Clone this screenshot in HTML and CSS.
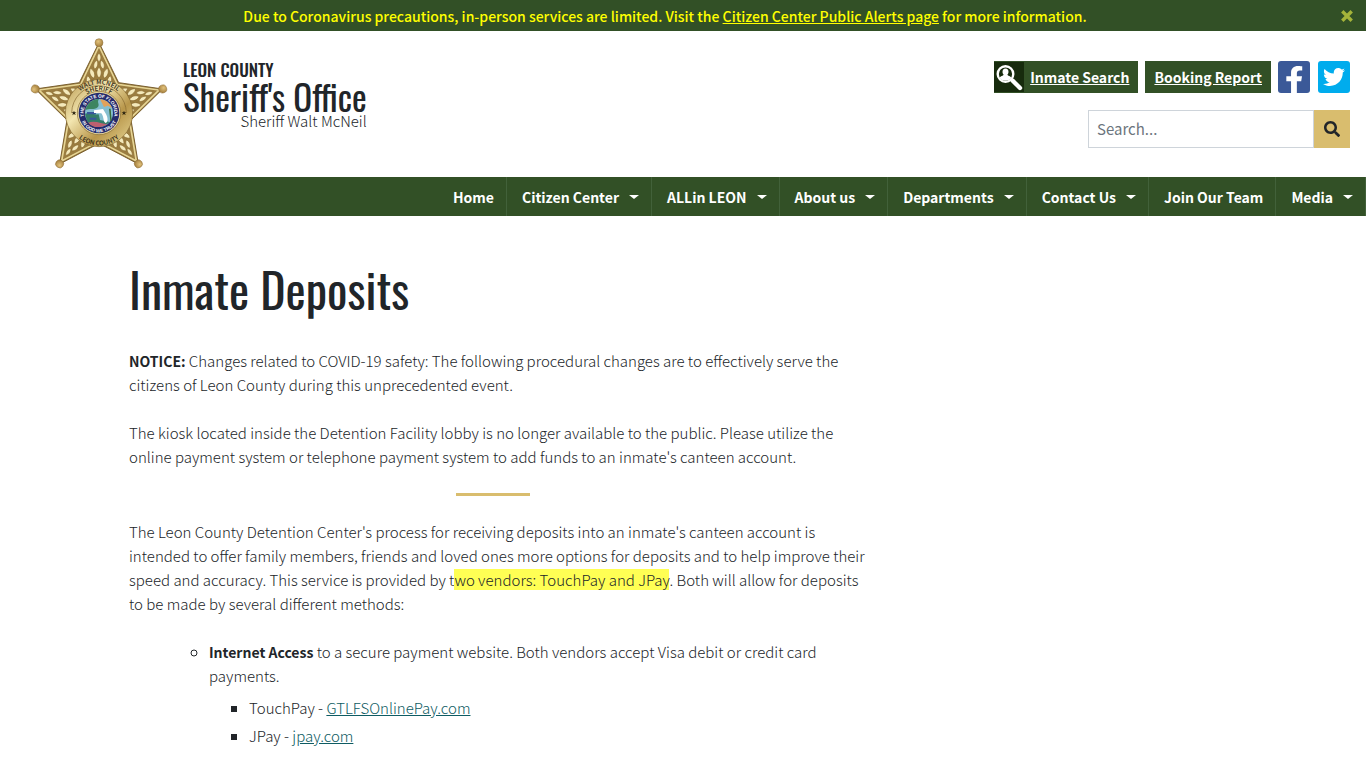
FILE: index.html
```html
<!DOCTYPE html>
<html lang="en">
<head>
    <meta charset="UTF-8">
    <meta name="viewport" content="width=device-width, initial-scale=1.0">
    <title>Inmate Deposits - Leon County Sheriff's Office</title>
    <link rel="stylesheet" href="styles.css">
</head>
<body>

<div class="alert-bar">
    <p>Due to Coronavirus precautions, in-person services are limited. Visit the <a href="#">Citizen Center Public Alerts page</a> for more information.</p>
    <button type="button" class="alert-close" aria-label="Close">
        <svg viewBox="0 0 12 12"><path d="M2.5 2.5l7 7M9.5 2.5l-7 7" stroke="currentColor" stroke-width="3.4" stroke-linecap="square"/></svg>
    </button>
</div>

<header class="site-header">
    <a class="brand" href="#">
        <svg class="badge" viewBox="30 20 414 402" role="img" aria-label="Sheriff star badge">
            <defs>
                <linearGradient id="gold" x1="0" y1="0" x2="1" y2="1">
                    <stop offset="0" stop-color="#b39247"/>
                    <stop offset=".35" stop-color="#f3e6b0"/>
                    <stop offset=".65" stop-color="#b8964a"/>
                    <stop offset="1" stop-color="#e9d898"/>
                </linearGradient>
                <radialGradient id="ball" cx=".4" cy=".35" r=".7">
                    <stop offset="0" stop-color="#e2c27c"/>
                    <stop offset="1" stop-color="#a07a38"/>
                </radialGradient>
                <path id="leaf" d="M0 -17C9 -8 9 6 0 15C-9 6 -9 -8 0 -17Z" fill="#f4e9bb" stroke="#88682c" stroke-width="2"/>
                <g id="arm">
                    <use href="#leaf" transform="translate(237 82) scale(.8)"/>
                    <use href="#leaf" transform="translate(227 104) rotate(14) scale(.85)"/>
                    <use href="#leaf" transform="translate(247 104) rotate(-14) scale(.85)"/>
                    <use href="#leaf" transform="translate(217 130) rotate(-20)"/>
                    <use href="#leaf" transform="translate(257 130) rotate(20)"/>
                    <use href="#leaf" transform="translate(237 128)"/>
                    <use href="#leaf" transform="translate(206 153) rotate(-10)"/>
                    <use href="#leaf" transform="translate(268 153) rotate(10)"/>
                    <circle cx="237" cy="37" r="12" fill="url(#ball)" stroke="#8f7038" stroke-width="1.5"/>
                </g>
                <path id="arc-name" d="M151 248A86 86 0 0 1 323 248"/>
                <path id="arc-rank" d="M170 248A67 67 0 0 1 304 248"/>
                <path id="arc-county" d="M140 248A97 97 0 0 0 334 248"/>
                <path id="arc-state" d="M194 264A46 46 0 1 1 280 264"/>
                <path id="arc-motto" d="M179 248A58 58 0 0 0 295 248"/>
            </defs>
            <path d="M237 37L296 157L428 176L333 269L355 401L237 339L119 401L141 269L46 176L178 157Z" fill="#8a6c32" stroke="#7b602e" stroke-width="3" stroke-linejoin="round"/>
            <path d="M237 47L292 162L417 179L328 267L349 392L237 333L125 392L146 267L57 179L182 162Z" fill="#9b7d40" stroke="#e7d594" stroke-width="5"/>
            <use href="#arm"/>
            <use href="#arm" transform="rotate(72 237 238)"/>
            <use href="#arm" transform="rotate(144 237 238)"/>
            <use href="#arm" transform="rotate(216 237 238)"/>
            <use href="#arm" transform="rotate(288 237 238)"/>
            <circle cx="237" cy="248" r="101" fill="url(#gold)" stroke="#84672f" stroke-width="2"/>
            <path d="M155 248A82 82 0 0 1 319 248" fill="none" stroke="#84672f" stroke-width="2"/>
            <circle cx="237" cy="248" r="65" fill="#e9dba2" stroke="#84672f" stroke-width="2"/>
            <circle cx="237" cy="248" r="61" fill="#252b6d"/>
            <circle cx="237" cy="248" r="42" fill="#86bfd0"/>
            <path d="M196 240C202 216 220 206 237 206C229 217 241 221 233 231C222 240 208 233 196 240Z" fill="#3d8560"/>
            <path d="M240 207C256 208 269 217 276 233L263 226L252 230Z" fill="#e2a25a"/>
            <path d="M195 250C213 243 221 255 236 252L240 269L269 275C250 295 212 296 200 269Z" fill="#347d68"/>
            <path d="M201 245h27v7h-27zM209 262h20v6h-20z" fill="#37579c"/>
            <path d="M222 240L249 236L258 251C264 262 265 275 257 278C248 274 253 261 244 249L222 248Z" fill="#fff"/>
            <path d="M267 235l4 37h4l-3-37z" fill="#386b39"/>
            <path d="M205 277C223 268 249 282 263 281C244 294 218 294 205 277Z" fill="#bd6070"/>
            <g class="badge-text">
                <text><textPath href="#arc-name" startOffset="50%">WALT MCNEIL</textPath></text>
                <text><textPath href="#arc-rank" startOffset="50%">SHERIFF</textPath></text>
                <text><textPath href="#arc-county" startOffset="50%">LEON COUNTY</textPath></text>
            </g>
            <path d="M162 241l2 5h5l-4 3 2 6-5-4-5 4 2-6-4-3h5zM312 241l2 5h5l-4 3 2 6-5-4-5 4 2-6-4-3h5z" fill="#2c2410"/>
            <g class="badge-motto">
                <text><textPath href="#arc-state" startOffset="50%">THE STATE OF FLORIDA</textPath></text>
                <text><textPath href="#arc-motto" startOffset="50%">IN GOD WE TRUST</textPath></text>
            </g>
        </svg>
        <span class="brand-text">
            <span class="brand-county">LEON COUNTY</span>
            <span class="brand-office">Sheriff's Office</span>
            <span class="brand-sheriff">Sheriff Walt McNeil</span>
        </span>
    </a>

    <div class="header-tools">
        <div class="quick-links">
            <a class="quick-btn" href="#">
                <svg class="inmate-icon" viewBox="0 0 30 30">
                    <rect width="30" height="30" fill="#172b0d"/>
                    <circle cx="11.5" cy="12" r="7.8" fill="none" stroke="#fff" stroke-width="2.4"/>
                    <path d="M18.5 18.5L26 26" stroke="#fff" stroke-width="4.4" stroke-linecap="round"/>
                    <path d="M11.500 6.500c-2 0-3 1.300-3 3.200 0 1.500.5 2.300 1.200 3-.1 1-3.500 1-4 3.300 1.500 1.800 3.500 2.500 5.800 2.500s4.300-.7 5.800-2.500c-.5-2.300-3.900-2.300-4-3.300.7-.7 1.200-1.500 1.200-3 0-1.900-1-3.200-3-3.200z" fill="#fff"/>
                </svg>
                <span>Inmate Search</span>
            </a>
            <a class="quick-btn" href="#"><span>Booking Report</span></a>
            <a class="social" href="#" aria-label="Facebook">
                <svg viewBox="0 0 32 32">
                    <rect width="32" height="32" rx="3" fill="#3b5998"/>
                    <path transform="translate(7 5) scale(.058 .053)" fill="#fff" d="M279.140 288l14.220-92.660h-88.910v-60.130c0-25.350 12.420-50.060 52.240-50.060h40.420V6.260S260.430 0 225.360 0c-73.220 0-121.080 44.380-121.080 124.720v70.620H22.890V288h81.390v224h100.170V288z"/>
                </svg>
            </a>
            <a class="social" href="#" aria-label="Twitter">
                <svg viewBox="0 0 32 32">
                    <rect width="32" height="32" rx="3" fill="#00aced"/>
                    <path transform="translate(5 5) scale(.043)" fill="#fff" d="M459.370 151.716c.325 4.548.325 9.097.325 13.645 0 138.720-105.583 298.558-298.558 298.558-59.452 0-114.680-17.219-161.137-47.106 8.447.974 16.568 1.299 25.340 1.299 49.055 0 94.213-16.568 130.274-44.832-46.132-.975-84.792-31.188-98.112-72.772 6.498.974 12.995 1.624 19.818 1.624 9.421 0 18.843-1.300 27.614-3.573-48.081-9.747-84.143-51.980-84.143-102.985v-1.299c13.969 7.797 30.214 12.670 47.431 13.319-28.264-18.843-46.781-51.005-46.781-87.391 0-19.492 5.197-37.360 14.294-52.954 51.655 63.675 129.300 105.258 216.365 109.807-1.624-7.797-2.599-15.918-2.599-24.040 0-57.828 46.782-104.934 104.934-104.934 30.213 0 57.502 12.670 76.670 33.137 23.715-4.548 46.456-13.320 66.599-25.340-7.798 24.366-24.366 44.833-46.132 57.827 21.117-2.273 41.584-8.122 60.426-16.243-14.292 20.791-32.161 39.308-52.628 54.253z"/>
                </svg>
            </a>
        </div>
        <form class="search">
            <input type="text" placeholder="Search..." aria-label="Search">
            <button type="submit" aria-label="Search">
                <svg viewBox="0 0 512 512"><path fill="currentColor" d="M505 442.700L405.300 343c-4.500-4.500-10.600-7-17-7H372c27.600-35.300 44-79.700 44-128C416 93.100 322.900 0 208 0S0 93.100 0 208s93.100 208 208 208c48.300 0 92.700-16.400 128-44v16.300c0 6.400 2.500 12.500 7 17l99.700 99.700c9.400 9.400 24.600 9.400 33.900 0l28.300-28.300c9.400-9.400 9.400-24.600.1-34zM208 336c-70.700 0-128-57.200-128-128 0-70.700 57.200-128 128-128 70.700 0 128 57.200 128 128 0 70.700-57.200 128-128 128z"/></svg>
            </button>
        </form>
    </div>
</header>

<nav class="main-nav">
    <ul>
        <li><a href="#">Home</a></li>
        <li><a class="dropdown" href="#">Citizen Center</a></li>
        <li><a class="dropdown" href="#">ALLin LEON</a></li>
        <li><a class="dropdown" href="#">About us</a></li>
        <li><a class="dropdown" href="#">Departments</a></li>
        <li><a class="dropdown" href="#">Contact Us</a></li>
        <li><a href="#">Join Our Team</a></li>
        <li><a class="dropdown" href="#">Media</a></li>
    </ul>
</nav>

<main class="container">
    <article class="content">
        <h1>Inmate Deposits</h1>
        <p><strong>NOTICE:</strong> Changes related to COVID-19 safety: The following procedural changes are to effectively serve the citizens of Leon County during this unprecedented event.</p>
        <p>The kiosk located inside the Detention Facility lobby is no longer available to the public. Please utilize the online payment system or telephone payment system to add funds to an inmate's canteen account.</p>
        <hr>
        <p>The Leon County Detention Center's process for receiving deposits into an inmate's canteen account is intended to offer family members, friends and loved ones more options for deposits and to help improve their speed and accuracy. This service is provided by t<mark>wo vendors: TouchPay and JPay</mark>. Both will allow for deposits to be made by several different methods:</p>
        <ul class="methods">
            <li><strong>Internet Access</strong> to a secure payment website. Both vendors accept Visa debit or credit card payments.
                <ul>
                    <li>TouchPay - <a href="#">GTLFSOnlinePay.com</a></li>
                    <li>JPay - <a href="#">jpay.com</a></li>
                </ul>
            </li>
        </ul>
    </article>
</main>

</body>
</html>
```

FILE: styles.css
```css
* {
    box-sizing: border-box;
}
body {
    margin: 0;
    font-family: "Source Sans Pro", "Noto Sans CJK SC", sans-serif;
    font-size: 15px;
    font-weight: 300;
    line-height: 24px;
    color: #212529;
    background: #fff;
}
svg {
    display: block;
}

/* Alert */
.alert-bar {
    display: flex;
    align-items: center;
    height: 31px;
    background: #325026;
    color: #ff0;
    font-size: 14px;
    font-weight: 500;
}
.alert-bar p {
    flex: 1;
    margin: 0;
    text-align: center;
}
.alert-bar a {
    color: #ff0;
}
.alert-close {
    width: 36px;
    padding: 0 11px;
    border: 0;
    background: none;
    color: #a5b43a;
}
.alert-close svg {
    width: 12px;
    height: 12px;
}

/* Header */
.site-header {
    display: flex;
    justify-content: space-between;
    padding: 6px 16px 6px 30px;
}
.brand {
    display: flex;
    gap: 15px;
    color: #212529;
    text-decoration: none;
}
.badge {
    width: 138px;
    height: 134px;
}
.badge-text {
    font: 500 19px "Noto Sans CJK SC", sans-serif;
    fill: #2c2410;
    text-anchor: middle;
}
.badge-motto {
    font: bold 14px "Liberation Sans", sans-serif;
    fill: #fff;
    text-anchor: middle;
}
.brand-text {
    display: flex;
    flex-direction: column;
    padding-top: 24px;
}
.brand-county,
.brand-office {
    font-family: Oswald, "Liberation Sans Narrow", sans-serif;
}
.brand-county {
    font-size: 17px;
    font-weight: 500;
    line-height: 18px;
}
.brand-office {
    font-size: 35px;
    font-weight: 400;
    line-height: 34px;
}
.brand-sheriff {
    line-height: 16px;
    text-align: right;
}
.header-tools {
    display: flex;
    flex-direction: column;
    align-items: flex-end;
    gap: 17px;
    padding-top: 24px;
}
.quick-links {
    display: flex;
    gap: 7px;
}
.quick-btn {
    display: flex;
    align-items: center;
    height: 32px;
    background: #325026;
    color: #fff;
    font-size: 14px;
    font-weight: 700;
}
.quick-btn span {
    padding: 0 9px;
}
.inmate-icon {
    width: 30px;
    height: 30px;
}
.inmate-icon + span {
    padding-left: 6px;
}
.social svg {
    width: 32px;
    height: 32px;
}
.social + .social {
    margin-left: 1px;
}
.search {
    display: flex;
    width: 262px;
    height: 38px;
}
.search input {
    flex: 1;
    min-width: 0;
    padding: 0 8px;
    border: 1px solid #ced4da;
    font: inherit;
}
.search input::placeholder {
    color: #6c757d;
    font-weight: 400;
    opacity: 1;
}
.search button {
    width: 36px;
    padding: 0 10px;
    border: 0;
    background: #d9bd6e;
    color: #212529;
}
.search button svg {
    width: 16px;
    height: 16px;
}

/* Navigation */
.main-nav {
    background: #325026;
}
.main-nav ul {
    display: flex;
    justify-content: flex-end;
    margin: 0;
    padding: 0;
    list-style: none;
}
.main-nav li {
    border-right: 1px solid #42613a;
}
.main-nav a {
    display: flex;
    align-items: center;
    height: 39px;
    padding: 0 12px 0 15px;
    color: #fff;
    font-size: 14px;
    font-weight: 700;
    text-decoration: none;
}
.main-nav .dropdown::after {
    content: "";
    margin-left: 10px;
    border-top: 4px solid #fff;
    border-left: 5px solid transparent;
    border-right: 5px solid transparent;
}

/* Content */
.container {
    max-width: 1140px;
    margin: 0 auto;
    padding: 0 16px;
}
.content {
    max-width: 728px;
    padding-top: 44px;
}
.content h1 {
    margin: 0 0 31px;
    font-family: Oswald, "Liberation Sans Narrow", sans-serif;
    font-size: 48px;
    font-weight: 400;
    line-height: 58px;
}
.content p {
    margin: 0 -12px 24px 0;
}
.content strong {
    font-size: 14px;
    font-weight: 700;
}
.content hr {
    width: 74px;
    height: 3px;
    margin: 0 auto 24px;
    border: 0;
    background: #d9bd6e;
}
.content mark {
    background: #ffff54;
    color: inherit;
}
.content a {
    color: #0e5c63;
}
.methods {
    margin: 0;
    padding-left: 80px;
    list-style: circle;
}
.methods ul {
    margin: 8px 0 0;
    padding-left: 40px;
    list-style: square;
}
.methods ul li {
    margin-bottom: 4px;
}
```
